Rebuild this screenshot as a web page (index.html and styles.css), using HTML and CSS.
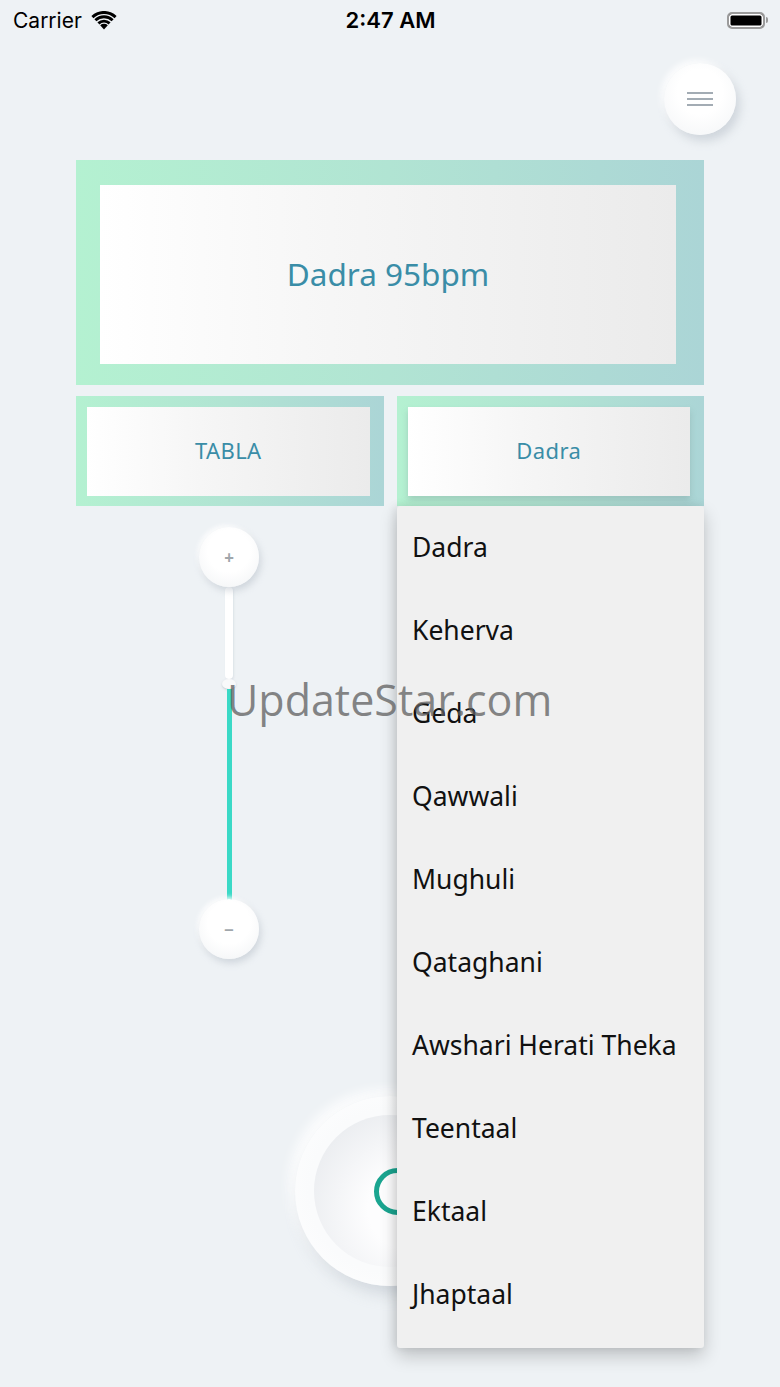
FILE: index.html
```html
<!DOCTYPE html>
<html lang="en">
<head>
    <meta charset="UTF-8">
    <meta name="viewport" content="width=device-width, initial-scale=1.0">
    <title>Tabla</title>
    <link rel="stylesheet" href="styles.css">
</head>
<body>
<div class="screen">

    <!-- status bar -->
    <div class="status-bar">
        <div class="carrier">Carrier
            <svg class="wifi" width="26" height="19" viewBox="0 0 26 19">
                <path d="M13 18.5 L9.2 14.3 A5.6 5.6 0 0 1 16.8 14.3 Z" fill="#000"/>
                <path d="M6.4 11.3 A9.6 9.6 0 0 1 19.6 11.3 L17.6 13.4 A6.8 6.8 0 0 0 8.4 13.4 Z" fill="#000"/>
                <path d="M3.4 8.2 A13.8 13.8 0 0 1 22.6 8.2 L20.6 10.3 A11 11 0 0 0 5.4 10.3 Z" fill="#000"/>
                <path d="M0.4 5.1 A18 18 0 0 1 25.6 5.1 L23.6 7.2 A15.2 15.2 0 0 0 2.4 7.2 Z" fill="#000"/>
            </svg>
        </div>
        <div class="time">2:47 AM</div>
        <div class="battery"><span class="battery-fill"></span><span class="battery-tip"></span></div>
    </div>

    <!-- menu -->
    <div class="top-row">
        <div class="menu-btn">
            <span></span><span></span><span></span>
        </div>
    </div>

    <!-- display -->
    <div class="frame frame-big">
        <div class="panel">Dadra 95bpm</div>
    </div>

    <div class="pick-row">
        <div class="frame frame-small">
            <div class="panel panel-small">TABLA</div>
        </div>
        <div class="frame frame-small">
            <div class="panel panel-small panel-open">Dadra</div>
        </div>
    </div>

    <!-- tempo slider -->
    <div class="slider">
        <div class="round-btn">+</div>
        <div class="track"></div>
        <div class="thumb"></div>
        <div class="fill"></div>
        <div class="round-btn minus">&minus;</div>
    </div>

    <!-- play button -->
    <div class="play-wrap">
        <div class="play-outer">
            <div class="play-inner"><span class="play-ring"></span></div>
        </div>
    </div>

    <!-- dropdown list -->
    <ul class="dropdown">
        <li>Dadra</li>
        <li>Keherva</li>
        <li>Geda</li>
        <li>Qawwali</li>
        <li>Mughuli</li>
        <li>Qataghani</li>
        <li>Awshari Herati Theka</li>
        <li>Teentaal</li>
        <li>Ektaal</li>
        <li>Jhaptaal</li>
    </ul>

    <div class="watermark">UpdateStar.com</div>
</div>
</body>
</html>
```

FILE: styles.css
```css
/* base */
body {
    margin: 0;
    padding: 0;
    background: #eef2f5;
    font-family: "Noto Sans", "Liberation Sans", sans-serif;
}

.screen {
    position: relative;
    width: 780px;
    height: 1387px;
    overflow: hidden;
    background: #eef2f5;
}

/* status bar */
.status-bar {
    height: 40px;
    display: flex;
    align-items: center;
    justify-content: space-between;
    padding: 0 12px 0 13px;
    font-family: "Inter", "Liberation Sans", sans-serif;
    color: #000;
}

.carrier {
    display: flex;
    align-items: center;
    gap: 9px;
    font-size: 21px;
    width: 150px;
}

.time {
    font-size: 22px;
    font-weight: 600;
}

.battery {
    width: 150px;
    display: flex;
    justify-content: flex-end;
    align-items: center;
}

.battery-fill {
    width: 34px;
    height: 13px;
    border: 2px solid #9b9b9b;
    border-radius: 5px;
    background: #000;
    box-shadow: inset 0 0 0 1.5px #fff;
}

.battery-tip {
    width: 2px;
    height: 6px;
    margin-left: 1px;
    background: #9b9b9b;
    border-radius: 0 2px 2px 0;
}

/* menu */
.top-row {
    height: 120px;
    display: flex;
    justify-content: flex-end;
    align-items: flex-start;
    padding-right: 44px;
}

.menu-btn {
    width: 72px;
    height: 72px;
    margin-top: 23px;
    border-radius: 50%;
    background: radial-gradient(circle at 50% 40%, #ffffff 40%, #f2f4f6 100%);
    box-shadow: 4px 6px 10px rgba(170, 180, 190, 0.45), -3px -3px 6px rgba(255, 255, 255, 0.9);
    display: flex;
    flex-direction: column;
    align-items: center;
    justify-content: center;
    gap: 4px;
}

.menu-btn span {
    width: 26px;
    height: 2px;
    background: #a3acb4;
}

/* frames */
.frame {
    margin: 0 76px;
    background: linear-gradient(90deg, #b4f1d1 0%, #b1e4d3 50%, #abd5d6 100%);
    box-sizing: border-box;
}

.frame-big {
    height: 225px;
    padding: 25px 28px 21px 24px;
}

.panel {
    height: 100%;
    background: linear-gradient(90deg, #ffffff 0%, #f6f6f6 40%, #ebebeb 100%);
    color: #3a8da7;
    font-size: 31.5px;
    display: flex;
    align-items: center;
    justify-content: center;
    padding-bottom: 3px;
    box-sizing: border-box;
}

.pick-row {
    display: flex;
    gap: 13px;
    margin: 11px 76px 0;
}

.frame-small {
    margin: 0;
    flex: 1;
    height: 110px;
    padding: 11px 14px 10px 11px;
}

.panel-small {
    font-size: 22px;
    letter-spacing: 0.4px;
}

.panel-open {
    box-shadow: 0 4px 6px rgba(120, 150, 150, 0.35);
}

/* slider */
.slider {
    width: 60px;
    margin: 21px 0 0 199px;
    display: flex;
    flex-direction: column;
    align-items: center;
}

.round-btn {
    width: 60px;
    height: 60px;
    border-radius: 50%;
    background: radial-gradient(circle at 50% 40%, #ffffff 45%, #f0f2f4 100%);
    box-shadow: 2px 4px 7px rgba(170, 180, 190, 0.45), -2px -2px 4px rgba(255, 255, 255, 0.9);
    color: #a0a6ab;
    font-size: 17px;
    font-weight: bold;
    display: flex;
    align-items: center;
    justify-content: center;
    position: relative;
    z-index: 1;
}

.track {
    width: 8px;
    height: 92px;
    background: #ffffff;
    border-radius: 4px;
    box-shadow: 1px 1px 2px rgba(180, 190, 200, 0.3);
}

.thumb {
    width: 14px;
    height: 10px;
    border-radius: 50%;
    background: #f8f9fa;
    box-shadow: 0 1px 2px rgba(160, 170, 180, 0.5);
}

.fill {
    width: 5px;
    height: 212px;
    background: #3ad9c6;
}

.minus {
    margin-top: -2px;
}

/* play */
.play-wrap {
    display: flex;
    justify-content: center;
    margin-top: 137px;
}

.play-outer {
    width: 190px;
    height: 190px;
    border-radius: 50%;
    background: radial-gradient(circle, #fafbfc 60%, #ffffff 100%);
    box-shadow: 6px 8px 16px rgba(170, 180, 190, 0.45), -6px -6px 12px rgba(255, 255, 255, 0.9);
    display: flex;
    align-items: center;
    justify-content: center;
}

.play-inner {
    width: 152px;
    height: 152px;
    border-radius: 50%;
    background: radial-gradient(circle at 62% 62%, #fdfdfe 30%, #e3e6ea 100%);
    display: flex;
    align-items: center;
    justify-content: center;
}

.play-ring {
    width: 37px;
    height: 37px;
    margin-left: 14px;
    border: 5px solid #1aa590;
    border-radius: 50%;
}

/* dropdown */
.dropdown {
    position: absolute;
    top: 506px;
    left: 397px;
    width: 307px;
    height: 842px;
    margin: 0;
    padding: 0;
    list-style: none;
    background: #f0f0f0;
    border-radius: 3px;
    box-shadow: 0 8px 18px rgba(0, 0, 0, 0.2), -3px 0 8px rgba(0, 0, 0, 0.08);
    box-sizing: border-box;
    z-index: 5;
}

.dropdown li {
    height: 83px;
    line-height: 83px;
    padding-left: 15px;
    font-size: 26.5px;
    color: #111;
    white-space: nowrap;
}

/* watermark */
.watermark {
    position: absolute;
    top: 670px;
    left: 227px;
    font-family: "Open Sans", "Noto Sans", sans-serif;
    font-size: 43px;
    color: rgba(95, 95, 95, 0.75);
    z-index: 10;
}
```
